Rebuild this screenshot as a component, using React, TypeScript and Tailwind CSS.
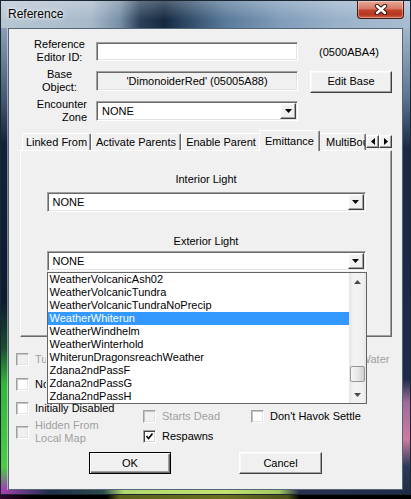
import React from "react";

// classic win32 bevels
const sunken =
  "border border-t-[#a0a0a0] border-l-[#a0a0a0] border-b-white border-r-white shadow-[inset_1px_1px_0_#696969,inset_-1px_-1px_0_#e3e3e3]";
const raised =
  "border border-t-white border-l-white border-b-[#404040] border-r-[#404040] shadow-[inset_-1px_-1px_0_#a0a0a0,inset_1px_1px_0_#f8f8f8]";

const Tri = ({ dir = "down", color = "#000" }: { dir?: "down" | "up" | "left" | "right"; color?: string }) => {
  if (dir === "left" || dir === "right") {
    return (
      <svg width="4" height="7" viewBox="0 0 4 7">
        <polygon points={dir === "left" ? "4,0 4,7 0,3.5" : "0,0 0,7 4,3.5"} fill={color} />
      </svg>
    );
  }
  return (
    <svg width="7" height="4" viewBox="0 0 7 4">
      <polygon points={dir === "down" ? "0,0 7,0 3.5,4" : "0,4 7,4 3.5,0"} fill={color} />
    </svg>
  );
};

const Combo = ({ w, value }: { w: string; value: string }) => (
  <div className={`h-[20px] ${w} bg-white p-[1px] flex ${sunken}`}>
    <span className="flex-1 pl-[4px] leading-[16px]">{value}</span>
    <span className={`w-[16px] h-[16px] flex items-center justify-center bg-[#f0f0f0] ${raised}`}>
      <Tri />
    </span>
  </div>
);

const Check = ({
  label,
  checked = false,
  disabled = false,
  clip = false,
}: {
  label: React.ReactNode;
  checked?: boolean;
  disabled?: boolean;
  clip?: boolean;
}) => (
  <div className={`flex items-center gap-[6px] whitespace-nowrap ${disabled ? "text-[#a0a0a0]" : "text-black"}`}>
    <span
      className={`w-[13px] h-[13px] shrink-0 flex items-center justify-center border border-t-[#a0a0a0] border-l-[#a0a0a0] border-b-white border-r-white ${
        disabled ? "bg-[#f0f0f0]" : "bg-white"
      } ${
        checked
          ? "shadow-[inset_1px_1px_0_#404040,inset_-1px_-1px_0_#d4d4d4]"
          : "shadow-[inset_1px_1px_0_#c4c4c4,inset_-1px_-1px_0_#e3e3e3]"
      }`}
    >
      {checked && (
        <svg width="7" height="7" viewBox="0 0 7 7">
          <path d="M0.5 3 L2.5 5.5 L6.5 0.5" stroke="#000" strokeWidth="1.6" fill="none" />
        </svg>
      )}
    </span>
    {/* labels that run under the open list are cut at its left edge */}
    <span className={clip ? "w-[11px] overflow-hidden" : ""}>{label}</span>
  </div>
);

const Tab = ({ label, w, active = false, left = false }: { label: string; w: string; active?: boolean; left?: boolean }) => (
  <div
    className={`${w} shrink-0 bg-[#f0f0f0] border-t border-l border-r border-t-white border-l-white border-r-[#696969] shadow-[inset_-1px_0_0_#a0a0a0] rounded-t-[2px] flex items-center whitespace-nowrap overflow-hidden ${
      active ? "relative z-10 h-[21px] -mx-[2px] -mb-[1px]" : "h-[17px]"
    } ${left ? "pl-[7px]" : "justify-center"}`}
  >
    {label}
  </div>
);

const items = [
  "WeatherVolcanicAsh02",
  "WeatherVolcanicTundra",
  "WeatherVolcanicTundraNoPrecip",
  "WeatherWhiterun",
  "WeatherWindhelm",
  "WeatherWinterhold",
  "WhiterunDragonsreachWeather",
  "Zdana2ndPassF",
  "Zdana2ndPassG",
  "Zdana2ndPassH",
];

export default function App() {
  return (
    <div className="w-[411px] h-[499px] bg-black overflow-hidden font-['Liberation_Sans',Arial,sans-serif] text-[11px] leading-[13px] text-black">
      <div className="h-[495px] flex flex-col border border-[#1b2633]">
        {/* Title bar */}
        <div className="relative h-[27px] shrink-0 pl-[7px] pt-[6px] bg-[linear-gradient(180deg,rgba(255,255,255,0.25),rgba(255,255,255,0)_70%),linear-gradient(90deg,#b8c6d3_0%,#a8b9ca_22%,#7890a7_29%,#2a4159_34%,#152840_40%,#2c4763_45%,#5a7b9b_55%,#7f9cb9_68%,#99b1c9_82%,#a9bdd1_100%)]">
          <span className="text-[12px] leading-[15px] [text-shadow:0_0_6px_#fff,0_0_3px_#fff]">Reference</span>
          <div className="absolute right-[6px] top-0 w-[47px] h-[18px] rounded-b-[4px] border border-t-0 border-[#4a1a12] bg-[linear-gradient(180deg,#e9a897_0%,#d67a66_45%,#c1412a_55%,#b83620_80%,#d0624a_100%)] shadow-[inset_0_0_0_1px_rgba(255,255,255,0.35)] flex items-center justify-center">
            <svg width="14" height="11" viewBox="0 0 14 11">
              <path d="M3 2 L11 9 M11 2 L3 9" stroke="#3a1a14" strokeWidth="4.4" strokeLinecap="round" />
              <path d="M3 2 L11 9 M11 2 L3 9" stroke="#fff" strokeWidth="2.4" strokeLinecap="round" />
            </svg>
          </div>
        </div>

        {/* Middle: frame sides + client */}
        <div className="flex h-[462px] shrink-0">
          <div className="w-[7px] bg-[linear-gradient(180deg,#8a9fb5_0%,#41566e_16%,#13223a_25%,#0e1a30_59%,#1a4a30_69%,#34b53c_77%,#4ccc48_95%,#a040b0_100%)]" />
          <div className="w-[395px] bg-[#f0f0f0] border border-[#556677] shadow-[0_0_0_1px_rgba(255,255,255,0.45)] flex flex-col">
            {/* Editor ID row */}
            <div className="flex items-center mt-[8px] h-[28px]">
              <div className="ml-[21px] w-[59px] text-center">
                Reference
                <br />
                Editor ID:
              </div>
              <div className={`ml-[7px] w-[202px] h-[19px] bg-white ${sunken}`} />
              <span className="ml-[21px] mt-[2px]">(0500ABA4)</span>
            </div>

            {/* Base object row */}
            <div className="flex items-center mt-[2px] h-[28px]">
              <div className="ml-[21px] w-[59px] text-center">
                Base
                <br />
                Object:
              </div>
              <div className={`ml-[7px] w-[202px] h-[20px] bg-[#f0f0f0] flex items-center justify-center ${sunken}`}>
                'DimonoiderRed' (05005A88)
              </div>
              <div className={`ml-[12px] w-[82px] h-[22px] mt-[1px] bg-[#f0f0f0] flex items-center justify-center ${raised}`}>
                Edit Base
              </div>
            </div>

            {/* Encounter zone row */}
            <div className="flex items-center mt-[3px] h-[26px]">
              <div className="ml-[21px] w-[59px] text-right pr-[2px]">
                Encounter
                <br />
                Zone
              </div>
              <div className="ml-[7px]">
                <Combo w="w-[202px]" value="NONE" />
              </div>
            </div>

            {/* Tabs */}
            <div className="relative ml-[11px] mt-[6px] w-[372px] h-[20px] pl-[2px] flex items-end">
              <Tab label="Linked From" w="w-[69px]" />
              <Tab label="Activate Parents" w="w-[90px]" />
              <Tab label="Enable Parent" w="w-[80px]" />
              <Tab label="Emittance" w="w-[61px]" active />
              <Tab label="MultiBound" w="w-[48px]" left />
              <div className="absolute right-0 top-[5px] flex">
                <span className={`w-[13px] h-[13px] bg-[#f0f0f0] flex items-center justify-center ${raised}`}>
                  <Tri dir="left" />
                </span>
                <span className={`w-[13px] h-[13px] bg-[#f0f0f0] flex items-center justify-center ${raised}`}>
                  <Tri dir="right" />
                </span>
              </div>
            </div>

            {/* Tab panel */}
            <div className="ml-[11px] w-[372px] h-[187px] border border-t-white border-l-white border-r-[#696969] border-b-[#696969] shadow-[inset_-1px_-1px_0_#a0a0a0] flex flex-col items-center">
              <div className="mt-[22px]">Interior Light</div>
              <div className="mt-[6px]">
                <Combo w="w-[319px]" value="NONE" />
              </div>
              <div className="mt-[23px]">Exterior Light</div>
              <div className="relative mt-[3px]">
                <Combo w="w-[319px]" value="NONE" />

                {/* open drop-down list */}
                <div className="absolute left-0 top-[21px] z-20 w-[320px] h-[132px] bg-white border border-[#646464] flex">
                  <div className="w-[301px] flex flex-col">
                    {items.map((it) => (
                      <div
                        key={it}
                        className={`h-[13px] pl-[2px] whitespace-nowrap ${
                          it === "WeatherWhiterun" ? "bg-[#3399ff] text-white" : ""
                        }`}
                      >
                        {it}
                      </div>
                    ))}
                  </div>
                  <div className="w-[17px] flex flex-col bg-[linear-gradient(90deg,#e3e3e3,#f3f3f3_25%,#f0f0f0_80%,#e6e6e6)]">
                    <div className="h-[17px] flex items-center justify-center">
                      <Tri dir="up" color="#4a4a4a" />
                    </div>
                    <div className="h-[76px]" />
                    <div className="mx-[1px] h-[16px] rounded-[2px] border border-[#979797] bg-[linear-gradient(90deg,#f6f6f6,#e6e6e6_55%,#cfcfcf)]" />
                    <div className="flex-1" />
                    <div className="h-[17px] flex items-center justify-center">
                      <Tri dir="down" color="#4a4a4a" />
                    </div>
                  </div>
                </div>
              </div>
            </div>

            {/* Check boxes under the panel */}
            <div className="h-[108px] flex">
              <div className="ml-[7px] w-[127px] flex flex-col">
                <div className="mt-[16px]">
                  <Check label="Turn Off Fire" disabled clip />
                </div>
                <div className="mt-[12px]">
                  <Check label="No AI Acquire" clip />
                </div>
                <div className="mt-[11px]">
                  <Check label="Initially Disabled" />
                </div>
                <div className="mt-[4px]">
                  <Check
                    disabled
                    label={
                      <>
                        Hidden From
                        <br />
                        Local Map
                      </>
                    }
                  />
                </div>
              </div>
              <div className="w-[108px] flex flex-col">
                <div className="mt-[73px]">
                  <Check label="Starts Dead" disabled />
                </div>
                <div className="mt-[7px]">
                  <Check label="Respawns" checked />
                </div>
              </div>
              <div className="flex-1 flex flex-col">
                <div className="mt-[16px]">
                  <Check label="Reflected By Auto Water" disabled />
                </div>
                <div className="mt-[44px]">
                  <Check label="Don't Havok Settle" />
                </div>
              </div>
            </div>

            {/* OK / Cancel */}
            <div className="flex mt-[7px]">
              <div className="ml-[80px] w-[82px] h-[22px] bg-[#f0f0f0] border border-black shadow-[inset_1px_1px_0_#fff,inset_-1px_-1px_0_#696969,inset_-2px_-2px_0_#a0a0a0] flex items-center justify-center">
                OK
              </div>
              <div className={`ml-[68px] w-[83px] h-[22px] bg-[#f0f0f0] flex items-center justify-center ${raised}`}>
                Cancel
              </div>
            </div>
          </div>
          <div className="w-[7px] bg-[linear-gradient(180deg,#a3b7cb_0%,#5d7590_15%,#1a2a44_26%,#1d2c4a_76%,#a06a9a_81%,#d07aa0_89%,#2a3a58_95%,#203048_100%)]" />
        </div>

        {/* bottom frame */}
        <div className="flex-1 bg-[linear-gradient(90deg,#b040b0_0%,#6a3a8a_5%,#1e2e4a_12%,#2a4a4a_25%,#b0d870_30%,#c4e270_55%,#a0c860_68%,#2a3050_73%,#1e2c48_100%)]" />
      </div>
      <div className="h-[4px] bg-[linear-gradient(90deg,#300830_0%,#000_8%,#000_26%,#5a6018_29%,#6a7020_55%,#4a5018_70%,#000_73%,#000_100%)]" />
    </div>
  );
}
